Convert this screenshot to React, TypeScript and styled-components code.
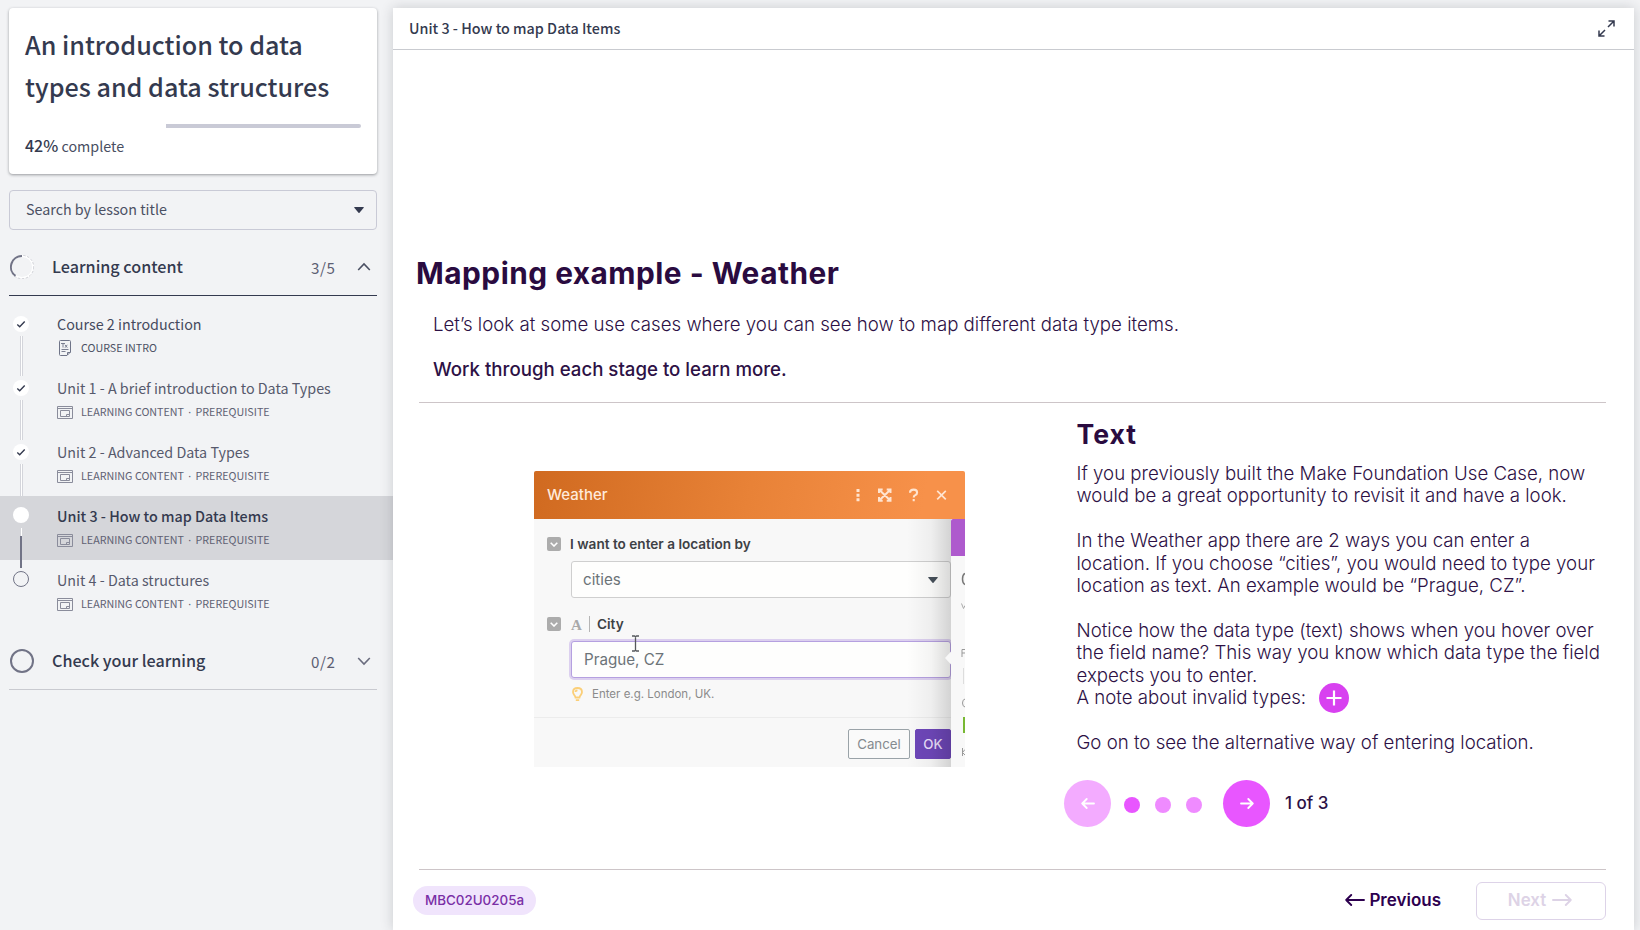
import React from "react";
import styled, { createGlobalStyle } from "styled-components";

const sans = `"Noto Sans CJK SC", "Noto Sans", sans-serif`;
const inter = `Inter, "Liberation Sans", sans-serif`;

const Global = createGlobalStyle`
  *, *::before, *::after { box-sizing: border-box; }
  body { margin: 0; background: #f2f3f5; }
  h1, h2, h3, p { margin: 0; font-weight: inherit; }
  button { padding: 0; border: 0; background: none; font: inherit; color: inherit; }
`;

const Page = styled.div`
  display: flex;
  width: 1640px;
  height: 930px;
  padding-top: 8px;
  overflow: hidden;
  font-family: ${sans};
  color: #343a4f;
`;

/* ---------- Sidebar ---------- */

const Sidebar = styled.aside`
  width: 393px;
  flex: none;
  display: flex;
  flex-direction: column;
`;

const CourseCard = styled.section`
  height: 166px;
  margin: 0 16px 0 9px;
  padding: 15px 16px 0;
  background: #fff;
  border-radius: 4px;
  box-shadow: 0 1px 3px rgba(40, 44, 50, 0.45);
`;

const CourseTitle = styled.h1`
  font-size: 25.15px;
  line-height: 42px;
  font-weight: 500;
  white-space: nowrap;
`;

const ProgressTrack = styled.div`
  display: flex;
  justify-content: flex-end;
  height: 4px;
  margin-top: 17px;
`;

const ProgressRest = styled.div`
  width: 195px;
  background: #c9cad6;
  border-radius: 0 2px 2px 0;
`;

const ProgressLabel = styled.p`
  margin-top: 3px;
  font-size: 14.3px;
  line-height: 28px;
  color: #484e61;
  white-space: nowrap;

  b {
    font-size: 16px;
    font-weight: 500;
    color: #343a4f;
  }
`;

const SearchSelect = styled.div`
  display: flex;
  align-items: center;
  justify-content: space-between;
  height: 40px;
  margin: 16px 16px 0 9px;
  padding: 0 12px 0 16px;
  border: 1px solid #c9cad6;
  border-radius: 4px;
  font-size: 14.3px;
  line-height: 20px;
  color: #4b5063;
`;

const SearchText = styled.span`
  padding-bottom: 2px;
`;

const SectionHeader = styled.header<{ $open?: boolean }>`
  display: flex;
  align-items: center;
  height: ${(p) => (p.$open ? 66 : 58)}px;
  margin: 0 16px 0 9px;
  padding: ${(p) => (p.$open ? "8px" : "0")} 6px 0 1px;
  border-bottom: 1px solid ${(p) => (p.$open ? "#343a4f" : "#c9cad0")};
`;

const SectionName = styled.h2`
  flex: 1;
  margin: -1px 0 0 18px;
  font-size: 16.15px;
  line-height: 24px;
  font-weight: 500;
`;

const SectionCount = styled.span`
  margin-right: 21.5px;
  font-size: 15.2px;
  letter-spacing: 0.6px;
  line-height: 24px;
  color: #5d6073;
`;

const Lessons = styled.div`
  display: flex;
  flex-direction: column;
  padding: 8px 0;
`;

const LessonRow = styled.div<{ $active?: boolean }>`
  display: flex;
  height: 64px;
  padding-left: 12px;
  background: ${(p) => (p.$active ? "#d5d6da" : "transparent")};
`;

const Rail = styled.svg`
  width: 18px;
  height: 64px;
  flex: none;
  overflow: visible;
`;

const LessonText = styled.div`
  display: flex;
  flex-direction: column;
  margin-left: 27px;
  padding-top: 9px;
`;

const LessonTitle = styled.h3<{ $active?: boolean; $dark?: boolean }>`
  font-size: 14.32px;
  line-height: 22px;
  font-weight: ${(p) => (p.$active ? 500 : 400)};
  color: ${(p) => (p.$active ? "#343a4f" : p.$dark ? "#454a5e" : "#56596c")};
  white-space: nowrap;
`;

const LessonMeta = styled.div<{ $dark?: boolean }>`
  display: flex;
  align-items: center;
  gap: 8px;
  height: 24px;
  margin-top: 1px;
  font-size: 10.72px;
  line-height: 16px;
  color: ${(p) => (p.$dark ? "#4b5063" : "#5f6173")};
  white-space: nowrap;

  svg { flex: none; }
`;

const MetaDot = styled.span`
  width: 11.5px;
  text-align: center;
  font-family: "Noto Sans", sans-serif;
`;

const MetaText = styled.span`
  display: flex;
`;

/* ---------- Main panel ---------- */

const Main = styled.main`
  width: 1241px;
  flex: none;
  display: flex;
  flex-direction: column;
  background: #fff;
  box-shadow: 0 0 12px rgba(40, 44, 56, 0.2);
`;

const MainHeader = styled.header`
  display: flex;
  align-items: center;
  justify-content: space-between;
  height: 42px;
  flex: none;
  padding: 0 19.5px 1px 16px;
  border-bottom: 1px solid #c9cbd0;
  font-size: 14.34px;
  line-height: 22px;
  font-weight: 500;
`;

const Slide = styled.article`
  display: flex;
  flex-direction: column;
  flex: 1;
  min-height: 0;
  padding: 202px 28px 0 26px;
  font-family: ${inter};
  color: #2d1145;
`;

const SlideTitle = styled.h1`
  margin-left: -3px;
  font-size: 29.8px;
  letter-spacing: 0.5px;
  line-height: 42px;
  font-weight: 700;
  color: #2a0b40;
`;

const Lead = styled.p<{ $bold?: boolean; $top: number }>`
  margin: ${(p) => p.$top}px 0 0 14px;
  font-size: 18.67px;
  line-height: 22.4px;
  font-weight: ${(p) => (p.$bold ? 500 : 300)};
`;

const Rule = styled.hr<{ $top: number }>`
  width: 1187px;
  height: 1px;
  flex: none;
  margin: ${(p) => p.$top}px 0 0;
  border: 0;
  background: #cdc5c8;
`;

const Columns = styled.div`
  display: flex;
  height: 466px;
  flex: none;
`;

const Figure = styled.div`
  width: 657.5px;
  flex: none;
  padding: 68px 0 0 115px;
`;

const Copy = styled.section`
  display: flex;
  flex-direction: column;
  padding-top: 15px;
`;

const CopyTitle = styled.h2`
  font-size: 26.6px;
  letter-spacing: 1px;
  line-height: 32px;
  font-weight: 700;
  color: #2a0b40;
`;

const Paragraph = styled.p`
  margin-top: 22.4px;
  font-size: 18.67px;
  line-height: 22.4px;
  font-weight: 300;
  white-space: nowrap;

  &:first-of-type { margin-top: 13px; }
`;

const NoteLine = styled.div`
  display: flex;
  align-items: center;
  gap: 12.5px;
  height: 22.4px;
  font-size: 18.67px;
  line-height: 22.4px;
  font-weight: 300;
`;

const PlusButton = styled.button`
  display: flex;
  align-items: center;
  justify-content: center;
  width: 30px;
  height: 30px;
  border-radius: 50%;
  background: #d841f0;
`;

const Pager = styled.nav`
  display: flex;
  align-items: center;
  margin: 26px 0 0 -12.5px;
`;

const PagerButton = styled.button<{ $faded?: boolean }>`
  display: flex;
  align-items: center;
  justify-content: center;
  width: 47px;
  height: 47px;
  border-radius: 50%;
  background: ${(p) => (p.$faded ? "#f3abff" : "#e856ff")};
`;

const Dots = styled.div`
  display: flex;
  gap: 14.5px;
  margin: 3px 21px 0 12.5px;
`;

const Dot = styled.span<{ $on?: boolean }>`
  width: 16.5px;
  height: 16.5px;
  border-radius: 50%;
  background: ${(p) => (p.$on ? "#e856ff" : "#ef8bff")};
`;

const PageCount = styled.span`
  margin-left: 15px;
  padding-bottom: 1px;
  font-size: 17px;
  line-height: 22px;
  font-weight: 500;
`;

const SlideFooter = styled.footer`
  display: flex;
  align-items: center;
  height: 61px;
  flex: none;
`;

const CodeBadge = styled.span`
  width: 123px;
  height: 29px;
  margin-left: -6px;
  border-radius: 15px;
  background: #f0e4fc;
  color: #7a2fa6;
  font-size: 13.4px;
  font-weight: 500;
  line-height: 29px;
  text-align: center;
`;

const PrevButton = styled.button`
  display: flex;
  align-items: center;
  gap: 4px;
  margin: -2px 35px 0 auto;
  font-size: 17px;
  font-weight: 600;
  line-height: 22px;
  color: #2d004f;
`;

const NextButton = styled.button`
  display: flex;
  align-items: center;
  justify-content: center;
  gap: 6px;
  width: 130px;
  height: 38px;
  border: 1px solid #ddd3e8;
  border-radius: 6px;
  font-size: 16.9px;
  font-weight: 600;
  line-height: 22px;
  color: #ddd3e6;
  padding: 0 2px 2px 0;
`;

/* ---------- Weather dialog figure ---------- */

const Dialog = styled.div`
  width: 431px;
  height: 296px;
  display: flex;
  flex-direction: column;
  overflow: hidden;
  border-radius: 2px 2px 0 0;
  background: #f8f8f8;
  color: #3d4145;
`;

const DialogHeader = styled.div`
  display: flex;
  align-items: center;
  height: 48px;
  flex: none;
  padding: 0 17px 1px 13px;
  background: linear-gradient(100deg, #d06a20 0%, #e88237 50%, #f7914a 90%);
  color: #ffeadb;
`;

const DialogTitle = styled.span`
  flex: 1;
  font-size: 15px;
  font-weight: 500;
`;

const DialogBody = styled.div`
  position: relative;
  display: flex;
  flex-direction: column;
  flex: 1;
`;

const FieldLabel = styled.div<{ $top: number }>`
  display: flex;
  align-items: center;
  height: 20px;
  margin: ${(p) => p.$top}px 0 0 13px;
  font-size: 13.6px;
  font-weight: 600;
`;

const Toggle = styled.span`
  display: flex;
  align-items: center;
  justify-content: center;
  width: 14px;
  height: 14px;
  margin-right: 9px;
  border-radius: 2px;
  background: #acacac;
`;

const TypeMark = styled.span`
  width: 20px;
  height: 16px;
  margin-right: 7px;
  padding-left: 1px;
  border-right: 1px solid #b5b5b5;
  font-family: "Liberation Serif", serif;
  font-size: 15px;
  font-weight: 700;
  line-height: 18px;
  color: #a9a9a9;
`;

const Field = styled.div<{ $focus?: boolean; $top: number }>`
  display: flex;
  align-items: center;
  justify-content: space-between;
  width: 380px;
  height: 37px;
  flex: none;
  margin: ${(p) => p.$top}px 0 0 37px;
  padding: 0 12px 0 ${(p) => (p.$focus ? 12 : 11)}px;
  border: 1px solid ${(p) => (p.$focus ? "#b5a0e0" : "#cfcfcf")};
  border-radius: 3px;
  background: #fefefd;
  box-shadow: ${(p) => (p.$focus ? "0 0 0 2px #dcd0ef" : "none")};
  font-size: 15.2px;
  color: #6c7378;
`;

const Hint = styled.div`
  display: flex;
  align-items: center;
  gap: 9px;
  height: 20px;
  margin: 6px 0 0 38px;
  font-size: 11.5px;
  color: #8b8b8b;
`;

const DialogActions = styled.div`
  display: flex;
  justify-content: flex-end;
  gap: 5px;
  flex: 1;
  margin-top: 13px;
  padding: 11px 14px 0 0;
  border-top: 1px solid #ececec;
`;

const DialogButton = styled.button<{ $primary?: boolean }>`
  width: ${(p) => (p.$primary ? 36 : 62)}px;
  height: 30px;
  border: 1px solid ${(p) => (p.$primary ? "#6e47b9" : "#9aa3a8")};
  border-radius: 2px;
  background: ${(p) => (p.$primary ? "#6e47b9" : "#fafafa")};
  color: ${(p) => (p.$primary ? "#e9defa" : "#858a8f")};
  font-size: 13.3px;
  font-weight: ${(p) => (p.$primary ? 500 : 400)};
`;

const EdgeShade = styled.div`
  position: absolute;
  top: 0;
  right: 14px;
  bottom: 0;
  width: 44px;
  background: linear-gradient(90deg, rgba(0, 0, 0, 0), rgba(0, 0, 0, 0.04) 55%, rgba(0, 0, 0, 0.15));
`;

const SidePanel = styled.div`
  position: absolute;
  top: 0;
  right: 0;
  bottom: 0;
  width: 14px;
  background: #f8f8f8;
`;

const PanelEdge = styled.svg`
  display: block;
  margin-left: -6px;
`;

const TextCursor = styled.svg`
  position: absolute;
  left: 97px;
  top: 116px;
`;

/* ---------- Icons ---------- */

const Chevron = ({ up }: { up?: boolean }) => (
  <svg width="14" height="10" viewBox="0 0 14 10" fill="none" stroke={up ? "#4b5063" : "#6a6c7e"} strokeWidth="1.6">
    <path d={up ? "M1.2 8 7 2l5.8 6" : "M1.2 2 7 8l5.8-6"} />
  </svg>
);

const Caret = ({ color, w, h }: { color: string; w: number; h: number }) => (
  <svg width={w} height={h} viewBox="0 0 10 6" preserveAspectRatio="none">
    <path d="M.6 0h8.8q.6.2.3.7L5.5 5.7q-.5.4-1 0L.3.7Q0 .2.6 0z" fill={color} />
  </svg>
);

const DocIcon = () => (
  <svg width="16" height="16" viewBox="0 0 16 16" fill="none" stroke="#6f7488" strokeWidth="1">
    <path d="M3.5.5h9q1 0 1 1V12L10 15.500H3.500q-1 0-1-1v-13q0-1 1-1z" />
    <path d="M10.500 15v-2.500h3" />
    <path d="M4 3.500h4M6 3.500v4M8 4.800l2.300 2.900M10.300 4.800 8 7.700M4.500 9.500h7M4.500 11.500h4" strokeWidth=".9" />
  </svg>
);

const WindowIcon = () => (
  <svg width="16" height="13" viewBox="0 0 16 13" fill="none" stroke="#8a8c9b" strokeWidth="1">
    <path d="M.5.5h15v12H.5zM.5 2.500h15M3.500 4.500h9v6h-9z" />
    <path d="M9.500 10v-1.500h2.500" />
  </svg>
);

const Arrow = ({ w, h, color, left, stroke }: { w: number; h: number; color: string; left?: boolean; stroke: number }) => (
  <svg width={w} height={h} viewBox={`0 0 ${w} ${h}`} fill="none" stroke={color} strokeWidth={stroke} strokeLinecap="round" strokeLinejoin="round">
    {left ? (
      <path d={`M${w - 1} ${h / 2}H1.2M${h / 2 + 0.2} 1 1.2 ${h / 2}l${h / 2 - 1} ${h / 2 - 1}`} />
    ) : (
      <path d={`M1 ${h / 2}h${w - 2.2}M${w - h / 2 - 0.2} 1 ${w - 1.2} ${h / 2}l-${h / 2 - 1} ${h / 2 - 1}`} />
    )}
  </svg>
);

const ExpandIcon = () => (
  <svg width="17" height="17" viewBox="0 0 17 17" fill="none" stroke="#343a4f" strokeWidth="1.5">
    <path d="M10.500 1H16v5.500M16 1 10 7M6.500 16H1v-5.500M1 16l6-6" />
  </svg>
);

const DialogTools = () => (
  <svg width="95" height="20" viewBox="0 0 95 20" fill="none" stroke="#ffe4d0" strokeWidth="1.7">
    <path d="M5 4v3M5 8.700v3M5 13.300v3" strokeWidth="3" />
    <path d="M26 8V4.500h3.700M33.700 4.500H37.500V8M37.500 12v3.700h-3.800M29.700 15.700H26V12M26.500 5l10.500 10.200M37 5 26.500 15.200" strokeWidth="2" />
    <path d="M57 7.800q0-3.200 3.700-3.200 3.400 0 3.400 2.800 0 1.800-1.800 2.700-1.600.8-1.600 2.300M60.700 14v2.300" strokeWidth="2.1" />
    <path d="M84.200 5.800l8.600 8.600M92.800 5.800l-8.600 8.600" />
  </svg>
);

const TickIcon = () => (
  <svg width="8" height="5" viewBox="0 0 8 5" fill="none" stroke="#fff" strokeWidth="1.6">
    <path d="M.7.8 4 4 7.300.8" />
  </svg>
);

const BulbIcon = () => (
  <svg width="11" height="15" viewBox="0 0 11 15" fill="none" stroke="#fbcf78" strokeWidth="1.8">
    <path d="M3.500 10.500Q3.300 9 2 7.600 1 6.300 1 5 1 1 5.500 1T10 5q0 1.300-1 2.600-1.300 1.400-1.500 2.900zM3.800 13.200h3.400M3.500 5q0-1.500 2-1.700" />
  </svg>
);

const SectionRing = ({ partial }: { partial?: boolean }) => (
  <svg width="24" height="24" viewBox="0 0 24 24" fill="none">
    <circle cx="12" cy="12" r="11" stroke={partial ? "#fff" : "#717386"} strokeWidth={partial ? 1.8 : 2} />
    {partial && <circle cx="12" cy="12" r="11.7" stroke="#b4b5c0" strokeWidth=".6" strokeDasharray="2.5 1.5" />}
    {partial && <path d="M12 1A11 11 0 0 0 5.500 20.900" stroke="#717386" strokeWidth="2" />}
  </svg>
);

type Mark = "done" | "current" | "todo";

const RailMark = ({ mark }: { mark: Mark }) => (
  <Rail viewBox="0 0 18 64">
    {mark === "done" && (
      <>
        <circle cx="9" cy="20" r="8" fill="#fff" />
        <path d="M5.300 20.500l2.400 2.200 5-5.200" fill="none" stroke="#343a4f" strokeWidth="1.4" />
        <path d="M8.500 32v40M10.500 32v40" stroke="#d4d5db" />
        <path d="M9.500 32v40" stroke="#fff" />
      </>
    )}
    {mark === "current" && (
      <>
        <circle cx="9" cy="19" r="8" fill="#fff" />
        <path d="M9.500 32v8" stroke="#fff" />
        <path d="M9 40v32" stroke="#717386" strokeWidth="2" />
      </>
    )}
    {mark === "todo" && <circle cx="9" cy="19" r="7.5" fill="none" stroke="#717386" />}
  </Rail>
);

const lessons: { title: string; mark: Mark; intro?: boolean }[] = [
  { title: "Course 2 introduction", mark: "done", intro: true },
  { title: "Unit 1 - A brief introduction to Data Types", mark: "done" },
  { title: "Unit 2 - Advanced Data Types", mark: "done" },
  { title: "Unit 3 - How to map Data Items", mark: "current" },
  { title: "Unit 4 - Data structures", mark: "todo" },
];

const WeatherDialog = () => (
  <Dialog>
    <DialogHeader>
      <DialogTitle>Weather</DialogTitle>
      <DialogTools />
    </DialogHeader>
    <DialogBody>
      <FieldLabel $top={15}>
        <Toggle><TickIcon /></Toggle>
        I want to enter a location by
      </FieldLabel>
      <Field $top={7}>
        cities
        <Caret color="#46505a" w={10} h={6} />
      </Field>
      <FieldLabel $top={16}>
        <Toggle><TickIcon /></Toggle>
        <TypeMark>A</TypeMark>
        City
      </FieldLabel>
      <Field $focus $top={7}>Prague, CZ</Field>
      <Hint>
        <BulbIcon />
        Enter e.g. London, UK.
      </Hint>
      <DialogActions>
        <DialogButton>Cancel</DialogButton>
        <DialogButton $primary>OK</DialogButton>
      </DialogActions>
      <TextCursor width="9" height="17" viewBox="0 0 9 17" fill="none" stroke="#55585c" strokeWidth="1.3">
        <path d="M1 1h2.500l1 .7 1-.7H8M4.500 1.500v14M1 16h2.500l1-.7 1 .7H8" />
      </TextCursor>
      <EdgeShade />
      <SidePanel>
        <PanelEdge width="20" height="248" viewBox="-6 0 20 248" fill="none">
          <path d="M0 2Q0 0 2 0h12v37H0z" fill="#ae5acd" />
          <path d="M0 132.500v13l-6-6.500z" fill="#f8f8f8" />
          <path d="M14 54.500q-2.500 1-2.500 5.500t2.500 5.500" stroke="#777" strokeWidth="1.5" />
          <path d="M10.500 84.500l2 5 1.500-3" stroke="#aaa" />
          <path d="M11 138v-7.500h3M11 134h3" stroke="#999" />
          <path d="M12.500 149v16" stroke="#ddd" />
          <path d="M14 180q-2.500.5-2.500 4t2.500 4" stroke="#999" />
          <path d="M13 198v16" stroke="#78b833" strokeWidth="2" />
          <path d="M11.500 229v8M14 230.500l-2.500 3 2.500 2.500" stroke="#999" />
        </PanelEdge>
      </SidePanel>
    </DialogBody>
  </Dialog>
);

export default function App() {
  return (
    <Page>
      <Global />
      <Sidebar>
        <CourseCard>
          <CourseTitle>
            An introduction to data
            <br />
            types and data structures
          </CourseTitle>
          <ProgressTrack>
            <ProgressRest />
          </ProgressTrack>
          <ProgressLabel>
            <b>42%</b> complete
          </ProgressLabel>
        </CourseCard>
        <SearchSelect>
          <SearchText>Search by lesson title</SearchText>
          <Caret color="#343a4f" w={10} h={6} />
        </SearchSelect>
        <SectionHeader $open>
          <SectionRing partial />
          <SectionName>Learning content</SectionName>
          <SectionCount>3/5</SectionCount>
          <Chevron up />
        </SectionHeader>
        <Lessons>
          {lessons.map((l) => {
            const active = l.mark === "current";
            return (
              <LessonRow key={l.title} $active={active}>
                <RailMark mark={l.mark} />
                <LessonText>
                  <LessonTitle $active={active} $dark={l.intro}>{l.title}</LessonTitle>
                  <LessonMeta $dark={l.intro}>
                    {l.intro ? <DocIcon /> : <WindowIcon />}
                    {l.intro ? (
                      <MetaText>COURSE INTRO</MetaText>
                    ) : (
                      <MetaText>
                        LEARNING CONTENT<MetaDot>·</MetaDot>PREREQUISITE
                      </MetaText>
                    )}
                  </LessonMeta>
                </LessonText>
              </LessonRow>
            );
          })}
        </Lessons>
        <SectionHeader>
          <SectionRing />
          <SectionName>Check your learning</SectionName>
          <SectionCount>0/2</SectionCount>
          <Chevron />
        </SectionHeader>
      </Sidebar>

      <Main>
        <MainHeader>
          Unit 3 - How to map Data Items
          <ExpandIcon />
        </MainHeader>
        <Slide>
          <SlideTitle>Mapping example - Weather</SlideTitle>
          <Lead $top={20}>
            Let’s look at some use cases where you can see how to map different data type items.
          </Lead>
          <Lead $bold $top={22.6}>Work through each stage to learn more.</Lead>
          <Rule $top={20.6} />
          <Columns>
            <Figure>
              <WeatherDialog />
            </Figure>
            <Copy>
              <CopyTitle>Text</CopyTitle>
              <Paragraph>
                If you previously built the Make Foundation Use Case, now
                <br />
                would be a great opportunity to revisit it and have a look.
              </Paragraph>
              <Paragraph>
                In the Weather app there are 2 ways you can enter a
                <br />
                location. If you choose “cities”, you would need to type your
                <br />
                location as text. An example would be “Prague, CZ”.
              </Paragraph>
              <Paragraph>
                Notice how the data type (text) shows when you hover over
                <br />
                the field name? This way you know which data type the field
                <br />
                expects you to enter.
              </Paragraph>
              <NoteLine>
                A note about invalid types:
                <PlusButton>
                  <svg width="16" height="16" viewBox="0 0 16 16" stroke="#fff" strokeWidth="2.2">
                    <path d="M8 .5v15M.5 8h15" />
                  </svg>
                </PlusButton>
              </NoteLine>
              <Paragraph>Go on to see the alternative way of entering location.</Paragraph>
              <Pager>
                <PagerButton $faded>
                  <Arrow w={14} h={11} color="#fff" left stroke={1.8} />
                </PagerButton>
                <Dots>
                  <Dot $on />
                  <Dot />
                  <Dot />
                </Dots>
                <PagerButton>
                  <Arrow w={14} h={11} color="#fff" stroke={1.8} />
                </PagerButton>
                <PageCount>1 of 3</PageCount>
              </Pager>
            </Copy>
          </Columns>
          <Rule $top={0} />
          <SlideFooter>
            <CodeBadge>MBC02U0205a</CodeBadge>
            <PrevButton>
              <Arrow w={20} h={12} color="#2d004f" left stroke={1.9} />
              Previous
            </PrevButton>
            <NextButton>
              Next
              <Arrow w={20} h={12} color="#ddd3e6" stroke={1.9} />
            </NextButton>
          </SlideFooter>
        </Slide>
      </Main>
    </Page>
  );
}
